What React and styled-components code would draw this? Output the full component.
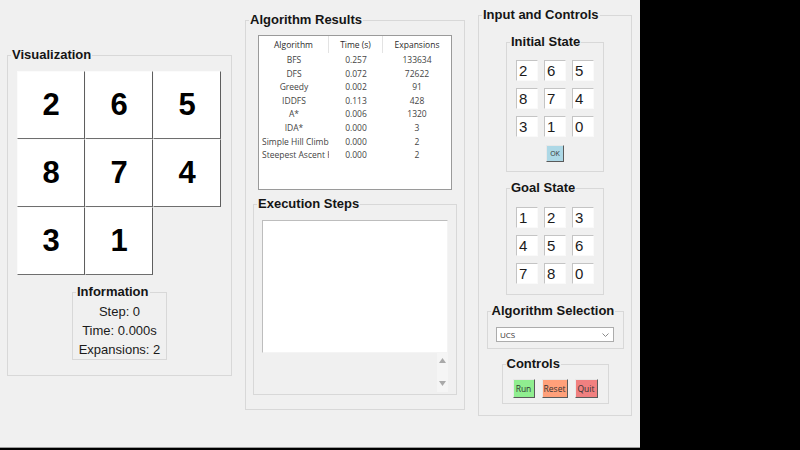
import React from 'react'
import styled, { createGlobalStyle } from 'styled-components'

const GlobalStyle = createGlobalStyle`
  html, body { margin: 0; padding: 0; background: #000; }
  body { font-family: "Liberation Sans", Arial, sans-serif; }
`

const puzzle = [2, 6, 5, 8, 7, 4, 3, 1, 0]
const initial = [2, 6, 5, 8, 7, 4, 3, 1, 0]
const goal = [1, 2, 3, 4, 5, 6, 7, 8, 0]

const results = [
  ['BFS', '0.257', '133634'],
  ['DFS', '0.072', '72622'],
  ['Greedy', '0.002', '91'],
  ['IDDFS', '0.113', '428'],
  ['A*', '0.006', '1320'],
  ['IDA*', '0.000', '3'],
  ['Simple Hill Climbing', '0.000', '2'],
  ['Steepest Ascent Hill Climbing', '0.000', '2'],
]

const Window = styled.div`
  width: 633px;
  height: 447px;
  background: #f0f0f0;
  border-bottom: 1px solid #9c9c9c;
  display: flex;
  align-items: flex-start;
  gap: 13px;
  padding-left: 7px;
  overflow: hidden;
`

const Frame = styled.fieldset`
  margin: ${p => p.$mt || 0}px 0 0;
  padding: ${p => p.$pad || '0'};
  width: ${p => p.$w}px;
  box-sizing: border-box;
  min-width: 0;
  border: 1px solid #d8d8d8;
  display: flex;
  flex-direction: column;
  align-items: center;
`

const Title = styled.legend`
  margin-left: 3px;
  padding: 0 1px;
  font: bold 13px/16px "Liberation Sans", Arial, sans-serif;
  color: #151515;
`

const Board = styled.div`
  display: grid;
  grid-template-columns: repeat(3, 68px);
  grid-template-rows: repeat(3, 68px);
  margin-right: 1px;
`

const Tile = styled.div`
  display: flex;
  align-items: center;
  justify-content: center;
  box-sizing: border-box;
  font: bold 31px "Liberation Sans", Arial, sans-serif;
  color: #000;
  background: ${p => (p.$empty ? 'transparent' : '#fff')};
  border: 1px solid;
  border-color: ${p => (p.$empty ? 'transparent' : '#fbfbfb #5e5e5e #6e6e6e #fbfbfb')};
`

const InfoLine = styled.div`
  font: 13px/19px "Liberation Sans", Arial, sans-serif;
  color: #1a1a1a;
  text-align: center;
`

const Table = styled.div`
  width: 194px;
  height: 155px;
  box-sizing: border-box;
  border: 1px solid #9a9a9a;
  background: #fff;
  font: 8.5px "Open Sans", "Noto Sans", sans-serif;
  color: #444;
  overflow: hidden;
`

const HeadRow = styled.div`
  display: grid;
  grid-template-columns: 70px 54px 68px;
  height: 17px;
`

const HeadCell = styled.div`
  display: flex;
  align-items: center;
  justify-content: center;
  color: #2a2a2a;
  border-right: ${p => (p.$last ? 'none' : '1px solid #e3e3e3')};
`

const Row = styled.div`
  display: grid;
  grid-template-columns: 70px 54px 68px;
  height: 13.6px;
  line-height: 13.6px;
`

const Cell = styled.div`
  text-align: center;
  white-space: nowrap;
  overflow: hidden;
  padding: 0 3px;
`

const StepsBox = styled.div`
  width: 186px;
  height: 133px;
  box-sizing: border-box;
  background: #fff;
  border: 1px solid;
  border-color: #bdbdbd #f4f4f4 #f4f4f4 #bdbdbd;
`

const ScrollStrip = styled.div`
  align-self: flex-end;
  margin-right: 8px;
  width: 11px;
  height: 39px;
  background: #f5f5f5;
  display: flex;
  flex-direction: column;
  justify-content: space-between;
  align-items: center;
  padding: 5px 0 6px;
  box-sizing: border-box;
`

const EntryGrid = styled.div`
  display: grid;
  grid-template-columns: repeat(3, 22px);
  gap: 7px 6px;
`

const Entry = styled.input`
  width: 22px;
  height: 21px;
  box-sizing: border-box;
  padding: 0 0 0 2px;
  margin: 0;
  border: 1px solid;
  border-color: #c4c4c4 #fafafa #fafafa #c4c4c4;
  background: #fff;
  font: 15px "Liberation Sans", Arial, sans-serif;
  color: #1b1b1b;
  outline: none;
`

const SmallButton = styled.button`
  margin: ${p => p.$mt || 0}px 0 0;
  width: ${p => p.$w}px;
  height: ${p => p.$h}px;
  padding: 0;
  box-sizing: border-box;
  background: ${p => p.$bg};
  border: 1px solid;
  border-color: #e8e8e8 #5a5a5a #5a5a5a #e8e8e8;
  font: ${p => p.$fs || 8.5}px "Open Sans", "Noto Sans", sans-serif;
  color: #333;
  display: flex;
  align-items: center;
  justify-content: center;
`

const Combo = styled.div`
  width: 118px;
  height: 15px;
  box-sizing: border-box;
  background: #fff;
  border: 1px solid #acacac;
  display: flex;
  align-items: center;
  justify-content: space-between;
  padding: 0 4px 0 3px;
  font: 8px "Open Sans", "Noto Sans", sans-serif;
  color: #333;
`

const ButtonRow = styled.div`
  display: flex;
  gap: 7px;
`

function App() {
  return (
    <>
      <GlobalStyle />
      <Window>
        <Frame $mt={47} $w={225} $pad="8px 0 15px">
          <Title>Visualization</Title>
          <Board>
            {puzzle.map((n, i) => (
              <Tile key={i} $empty={n === 0}>{n === 0 ? '' : n}</Tile>
            ))}
          </Board>
          <Frame $mt={9} $w={95} $pad="2px 0 0">
            <Title>Information</Title>
            <InfoLine>Step: 0</InfoLine>
            <InfoLine>Time: 0.000s</InfoLine>
            <InfoLine>Expansions: 2</InfoLine>
          </Frame>
        </Frame>

        <Frame $mt={12} $w={220} $pad="7px 0 14px">
          <Title>Algorithm Results</Title>
          <Table>
            <HeadRow>
              <HeadCell>Algorithm</HeadCell>
              <HeadCell>Time (s)</HeadCell>
              <HeadCell $last>Expansions</HeadCell>
            </HeadRow>
            {results.map(r => (
              <Row key={r[0]}>
                <Cell>{r[0]}</Cell>
                <Cell>{r[1]}</Cell>
                <Cell>{r[2]}</Cell>
              </Row>
            ))}
          </Table>
          <Frame $mt={6} $w={204} $pad="8px 0 2px">
            <Title>Execution Steps</Title>
            <StepsBox />
            <ScrollStrip>
              <svg width="7" height="5" viewBox="0 0 7 5"><polygon points="3.5,0 7,5 0,5" fill="#a9a9a9" /></svg>
              <svg width="7" height="5" viewBox="0 0 7 5"><polygon points="0,0 7,0 3.5,5" fill="#a9a9a9" /></svg>
            </ScrollStrip>
          </Frame>
        </Frame>

        <Frame $mt={7} $w={154} $pad="11px 0 11px">
          <Title>Input and Controls</Title>
          <Frame $w={98} $pad="10px 0 9px">
            <Title>Initial State</Title>
            <EntryGrid>
              {initial.map((n, i) => <Entry key={i} defaultValue={n} readOnly />)}
            </EntryGrid>
            <SmallButton $mt={8} $w={18} $h={17} $bg="#add8e6" $fs={7}>OK</SmallButton>
          </Frame>
          <Frame $mt={8} $w={98} $pad="11px 0 10px">
            <Title>Goal State</Title>
            <EntryGrid>
              {goal.map((n, i) => <Entry key={i} defaultValue={n} readOnly />)}
            </EntryGrid>
          </Frame>
          <Frame $mt={8} $w={137} $pad="8px 0 6px">
            <Title>Algorithm Selection</Title>
            <Combo>
              <span>UCS</span>
              <svg width="7" height="4" viewBox="0 0 7 4"><polyline points="0.5,0.5 3.5,3.5 6.5,0.5" fill="none" stroke="#8a8a8a" strokeWidth="1" /></svg>
            </Combo>
          </Frame>
          <Frame $mt={7} $w={107} $pad="7px 0 5px">
            <Title>Controls</Title>
            <ButtonRow>
              <SmallButton $w={22} $h={19} $bg="#90ee90">Run</SmallButton>
              <SmallButton $w={26} $h={19} $bg="#ffa07a">Reset</SmallButton>
              <SmallButton $w={23} $h={19} $bg="#f08080">Quit</SmallButton>
            </ButtonRow>
          </Frame>
        </Frame>
      </Window>
    </>
  )
}

export default App
